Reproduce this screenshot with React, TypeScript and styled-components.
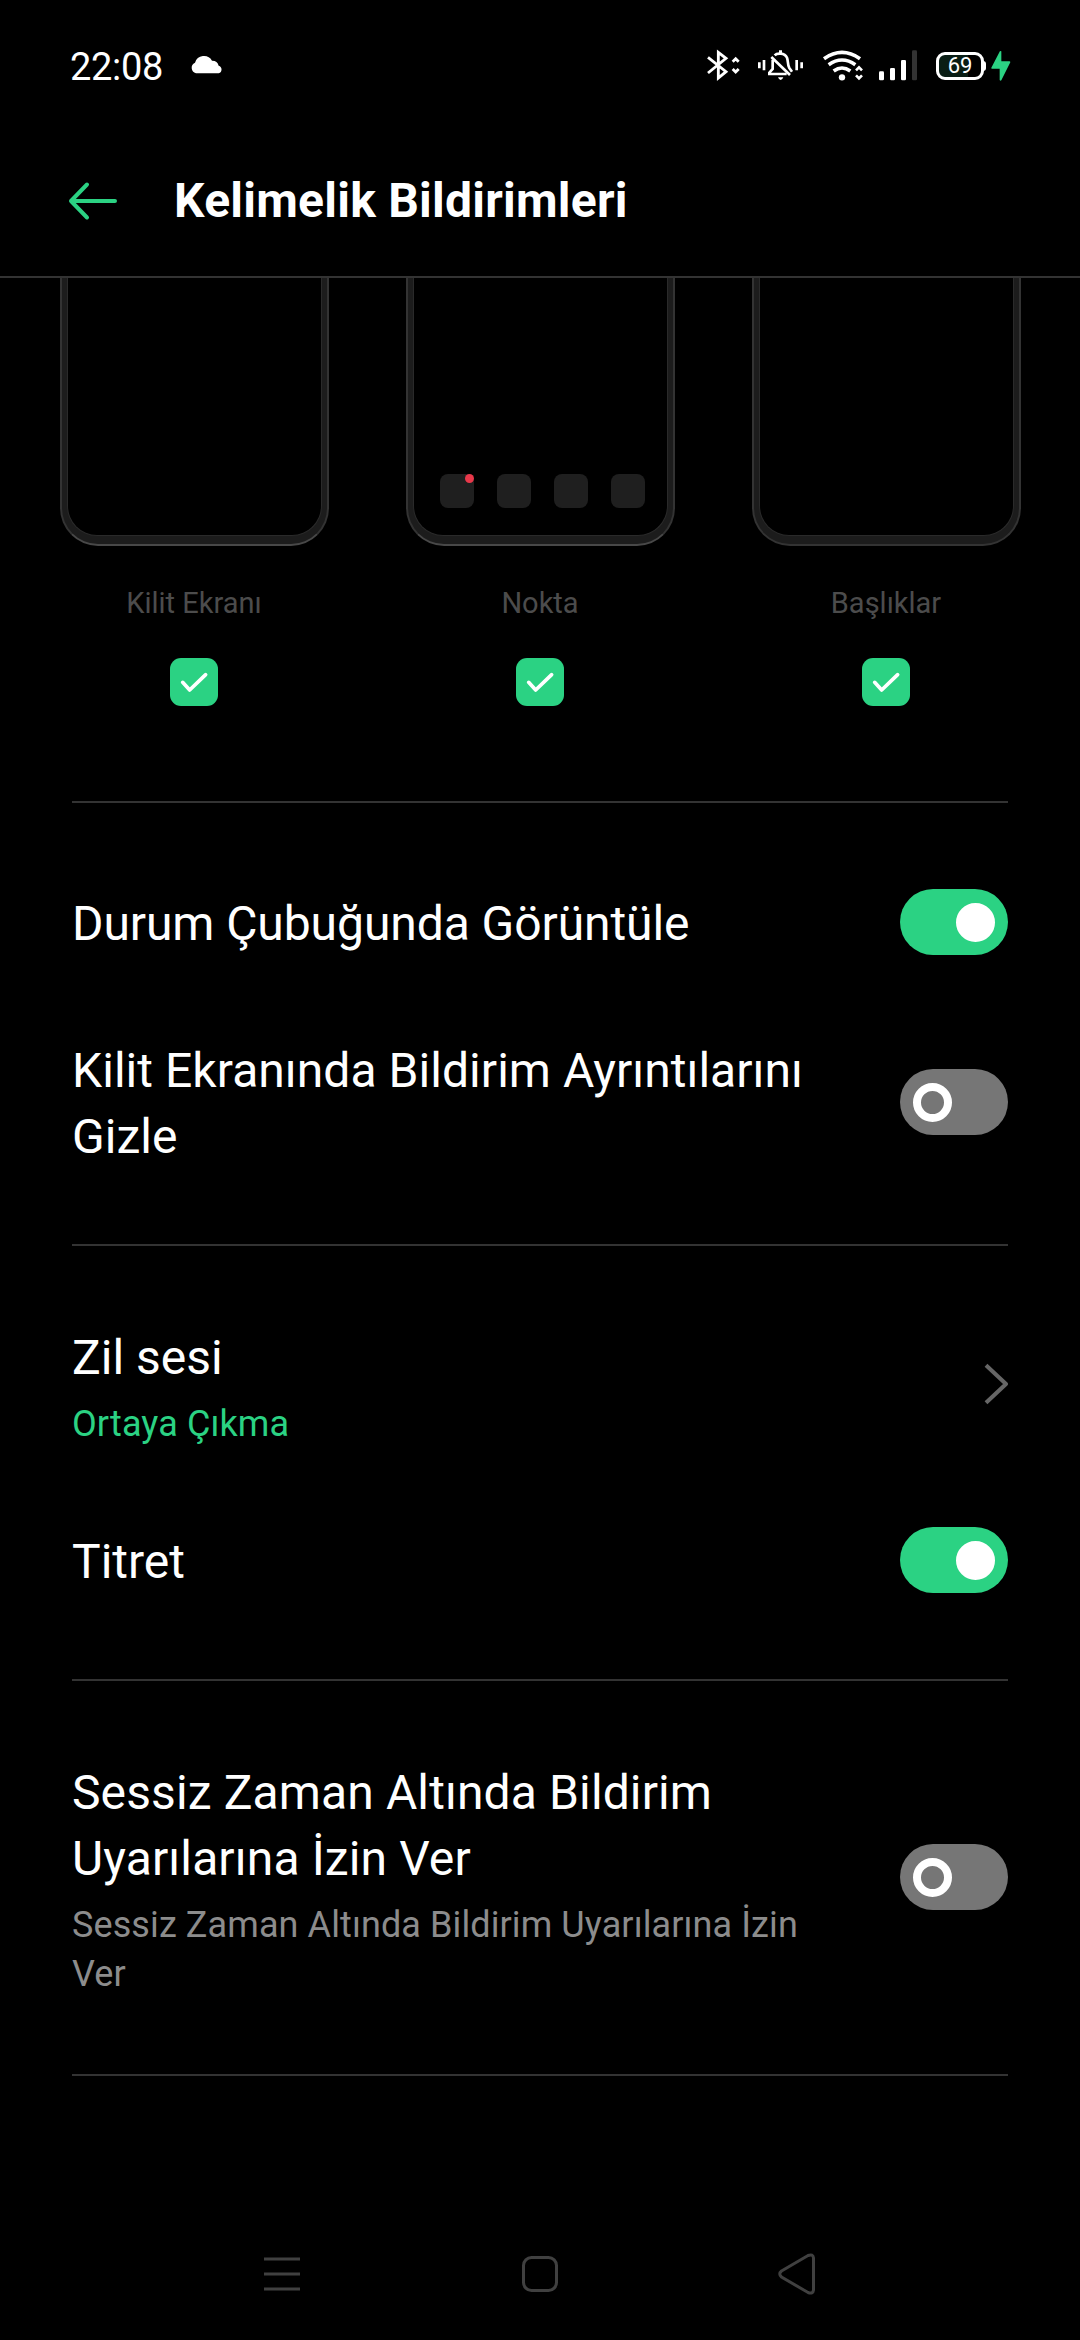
import React, { useState } from "react";
import styled, { createGlobalStyle } from "styled-components";

const GREEN = "#2bd283";

const GlobalStyle = createGlobalStyle`
  * { box-sizing: border-box; }
  html, body { margin: 0; background: #000; }
  body { font-family: Roboto, "Noto Sans", sans-serif; color: #fff; }
`;

const Screen = styled.div`
  width: 1080px;
  height: 2340px;
  display: flex;
  flex-direction: column;
  background: #000;
  overflow: hidden;
`;

const StatusBar = styled.div`
  height: 126px;
  padding: 1px 69px 0 70px;
  display: flex;
  align-items: center;
  justify-content: space-between;
  flex: none;
`;

const StatusGroup = styled.div`
  display: flex;
  align-items: center;
`;

const Clock = styled.span`
  font-size: 38px;
  line-height: 44px;
  width: 94px;
  margin: 6px 26px 0 0;
  font-weight: 400;
  letter-spacing: -0.3px;
  white-space: nowrap;
`;

const StatusIcons = styled.svg`
  display: block;
  margin-top: 4px;
`;

const Battery = styled.div`
  position: relative;
  width: 48px;
  height: 28px;
  margin: 5px 7px 0 17px;
  border: 3px solid #fff;
  border-radius: 9px;
  background: linear-gradient(90deg, #0a1e15 0 69%, #000 69%);
  display: flex;
  align-items: center;
  justify-content: center;
  font-size: 22px;
  line-height: 22px;
  font-weight: 400;

  &::after {
    content: "";
    position: absolute;
    right: -5px;
    top: 6px;
    width: 3px;
    height: 10px;
    border-radius: 0 3px 3px 0;
    background: #fff;
  }
`;

const Header = styled.header`
  height: 152px;
  flex: none;
  padding: 38px 67px 0;
  display: flex;
  align-items: flex-start;
  border-bottom: 2px solid #333;
`;

const BackButton = styled.button`
  width: 52px;
  height: 74px;
  margin-right: 55px;
  padding: 0;
  border: 0;
  background: none;
  display: flex;
  align-items: center;
`;

const Title = styled.h1`
  margin: 0;
  font-size: 48px;
  line-height: 74px;
  font-weight: 700;
  letter-spacing: 0.25px;
  white-space: nowrap;
`;

const PreviewRow = styled.div`
  display: grid;
  grid-template-columns: repeat(3, 1fr);
  padding: 0 21px;
  height: 523px;
  flex: none;
`;

const PreviewColumn = styled.div`
  display: flex;
  flex-direction: column;
  align-items: center;
`;

const PhoneFrame = styled.div<{ $bright: boolean }>`
  width: 269px;
  height: 268px;
  padding: 0 5px 8px;
  background: #1c1c1c;
  border: 2px solid #333;
  border-top: 0;
  border-bottom-color: ${(p) => (p.$bright ? "#484848" : "#333")};
  border-radius: 0 0 38px 38px;
`;

const PhoneScreen = styled.div`
  height: 100%;
  background: #000;
  border: 1px solid #2a2a2a;
  border-top: 0;
  border-radius: 0 0 30px 30px;
  display: flex;
  align-items: flex-end;
  justify-content: center;
  gap: 23px;
  padding: 0 0 27px 5px;
`;

const AppTile = styled.span`
  position: relative;
  width: 34px;
  height: 34px;
  border-radius: 8px;
  background: #1f1f1f;
`;

const Dot = styled.i`
  position: absolute;
  right: 0;
  top: 0;
  width: 9px;
  height: 9px;
  border-radius: 50%;
  background: #e8384a;
`;

const PreviewLabel = styled.span`
  margin-top: 37px;
  font-size: 29px;
  line-height: 40px;
  color: #4c4c4c;
`;

const CheckBox = styled.button`
  width: 48px;
  height: 48px;
  margin-top: 35px;
  padding: 0;
  border: 0;
  border-radius: 11px;
  background: ${GREEN};
`;

const Section = styled.section<{ $bottom: number }>`
  margin: 0 72px;
  padding: 41px 0 ${(p) => p.$bottom}px;
  border-top: 2px solid #333;
  flex: none;
`;

const Rule = styled.div`
  margin: 0 72px;
  height: 2px;
  flex: none;
  background: #333;
`;

const Row = styled.div<{ $bottom?: number }>`
  min-height: 156px;
  padding: 34px 0 ${(p) => p.$bottom ?? 34}px;
  display: flex;
  align-items: center;
  justify-content: space-between;
  gap: 60px;
`;

const RowText = styled.div`
  flex: 1;
  padding-top: 4px;
`;

const RowTitle = styled.div<{ $tracking?: number }>`
  font-size: 48px;
  line-height: 66px;
  letter-spacing: ${(p) => p.$tracking ?? 0}px;
`;

const RowNote = styled.div<{ $accent?: boolean }>`
  margin: 9px 0 -1px;
  font-size: 36px;
  line-height: 49px;
  letter-spacing: 0.1px;
  color: ${(p) => (p.$accent ? GREEN : "#8c8c8c")};
`;

const Chevron = styled.svg`
  flex: none;
  margin-bottom: 2px;
`;

const Track = styled.button<{ $on: boolean }>`
  flex: none;
  width: 108px;
  height: 66px;
  padding: 0 13px;
  border: 0;
  border-radius: 33px;
  background: ${(p) => (p.$on ? GREEN : "#767676")};
  display: flex;
  align-items: center;
  justify-content: ${(p) => (p.$on ? "flex-end" : "flex-start")};
`;

const Thumb = styled.span<{ $on: boolean }>`
  width: 39px;
  height: 39px;
  border-radius: 50%;
  border: 8px solid #fff;
  background: ${(p) => (p.$on ? "#fff" : "transparent")};
`;

const NavBar = styled.nav`
  margin-top: auto;
  height: 132px;
  flex: none;
  padding: 0 262px;
  display: flex;
  align-items: center;
  justify-content: space-between;
`;

function Switch({ initial }: { initial: boolean }) {
  const [on, setOn] = useState(initial);
  return (
    <Track $on={on} role="switch" aria-checked={on} onClick={() => setOn(!on)}>
      <Thumb $on={on} />
    </Track>
  );
}

function Preview({ label, apps, bright }: { label: string; apps?: boolean; bright: boolean }) {
  return (
    <PreviewColumn>
      <PhoneFrame $bright={bright}>
        <PhoneScreen>
          {apps && [0, 1, 2, 3].map((i) => <AppTile key={i}>{i === 0 && <Dot />}</AppTile>)}
        </PhoneScreen>
      </PhoneFrame>
      <PreviewLabel>{label}</PreviewLabel>
      <CheckBox role="checkbox" aria-checked>
        <svg width="48" height="48" viewBox="0 0 144 144" fill="none">
          <path d="M38 73 L59 96 L107 50" stroke="#fff" strokeWidth="11" strokeLinecap="round" strokeLinejoin="round" />
        </svg>
      </CheckBox>
    </PreviewColumn>
  );
}

export default function App() {
  return (
    <Screen>
      <GlobalStyle />
      <StatusBar>
        <StatusGroup>
          <Clock>22:08</Clock>
          <svg width="34" height="20" viewBox="0 0 102 60" fill="#fff">
            <path d="M18 58 A17 17 0 0 1 15 26 A28 28 0 0 1 66 20 A20 20 0 0 1 86 35 A12 12 0 0 1 86 58 Z" />
          </svg>
        </StatusGroup>
        <StatusGroup>
          <StatusIcons width="213" height="34" viewBox="48 44 639 102" fill="none" stroke="#fff">
            <g strokeWidth="8.5">
              <path d="M54 69 L108 112 L85 131 V54 L108 72 L54 116" />
              <path d="M128 82 L137 73 L146 82 M128 104 L137 113 L146 104" />
            </g>
            <g strokeWidth="8">
              <path d="M208 84 V102 M222 77 V108 M320 77 V108 M335 84 V102" />
              <path d="M248 76 V104 L238 115 V119 H290 M254 63 C260 56 284 54 291 70 C295 80 292 91 298 101 L306 112" />
              <path d="M244 68 L300 122" />
            </g>
            <path d="M267 48 h9 v8 h-9z M264 129 h16 q-3 8 -8 8 t-8 -8z" fill="#fff" stroke="none" />
            <g strokeWidth="11">
              <path d="M402 73 Q456 35 510 73" />
              <path d="M416 91 Q456 63 496 91" />
              <path d="M431 110 Q456 92 481 110" />
            </g>
            <circle cx="456" cy="129" r="9.5" fill="#fff" stroke="none" />
            <path d="M498 108 L507 99 L516 108 M498 123 L507 132 L516 123" strokeWidth="8" />
            <g stroke="none" fill="#fff">
              <rect x="567" y="111" width="15" height="27" rx="4" />
              <rect x="600" y="101" width="15" height="37" rx="4" />
              <rect x="633" y="77" width="15" height="61" rx="4" />
              <rect x="666" y="48" width="15" height="90" rx="4" fill="#333" />
            </g>
          </StatusIcons>
          <Battery>69</Battery>
          <StatusIcons width="20" height="30" viewBox="0 0 60 90" fill={GREEN}>
            <path d="M27 0 L1 50 Q0 53 3 53 H26 V87 Q28 91 31 88 L58 34 Q58 31 55 31 H31 V1 Z" />
          </StatusIcons>
        </StatusGroup>
      </StatusBar>

      <Header>
        <BackButton aria-label="Geri">
          <svg width="52" height="40" viewBox="0 0 52 40" fill="none" stroke={GREEN} strokeWidth="4" strokeLinecap="round" strokeLinejoin="round">
            <path d="M48 20 H4 M20 3.5 L4 20 L20 36.5" />
          </svg>
        </BackButton>
        <Title>Kelimelik Bildirimleri</Title>
      </Header>

      <PreviewRow>
        <Preview label="Kilit Ekranı" bright />
        <Preview label="Nokta" apps bright />
        <Preview label="Başlıklar" bright={false} />
      </PreviewRow>

      <Section $bottom={42}>
        <Row>
          <RowText>
            <RowTitle $tracking={-0.08}>Durum Çubuğunda Görüntüle</RowTitle>
          </RowText>
          <Switch initial />
        </Row>
        <Row $bottom={32}>
          <RowText>
            <RowTitle $tracking={0.05}>Kilit Ekranında Bildirim Ayrıntılarını Gizle</RowTitle>
          </RowText>
          <Switch initial={false} />
        </Row>
      </Section>

      <Section $bottom={41}>
        <Row>
          <RowText>
            <RowTitle>Zil sesi</RowTitle>
            <RowNote $accent>Ortaya Çıkma</RowNote>
          </RowText>
          <Chevron width="24" height="42" viewBox="0 0 24 42" fill="none" stroke="#666" strokeWidth="4" strokeLinejoin="round">
            <path d="M2 2.2 L22 21 L2 39.8" />
          </Chevron>
        </Row>
        <Row>
          <RowText>
            <RowTitle>Titret</RowTitle>
          </RowText>
          <Switch initial />
        </Row>
      </Section>

      <Section $bottom={42}>
        <Row>
          <RowText>
            <RowTitle $tracking={0.12}>Sessiz Zaman Altında Bildirim Uyarılarına İzin Ver</RowTitle>
            <RowNote>Sessiz Zaman Altında Bildirim Uyarılarına İzin Ver</RowNote>
          </RowText>
          <Switch initial={false} />
        </Row>
      </Section>
      <Rule />

      <NavBar>
        <svg width="40" height="42" viewBox="0 0 40 42" stroke="#404040" strokeWidth="3">
          <path d="M2 6 H38 M2 21 H38 M2 36 H38" />
        </svg>
        <svg width="40" height="42" viewBox="0 0 40 42" fill="none" stroke="#404040" strokeWidth="3">
          <rect x="3.5" y="4.5" width="33" height="33" rx="8" />
        </svg>
        <svg width="40" height="42" viewBox="0 0 40 42" fill="none" stroke="#404040" strokeWidth="3">
          <path d="M3.5 18 L30 2.5 Q35 0.5 35.5 5 V37 Q35 41.5 30 39.5 L3.5 24 Q0 21 3.5 18 Z" />
        </svg>
      </NavBar>
    </Screen>
  );
}
